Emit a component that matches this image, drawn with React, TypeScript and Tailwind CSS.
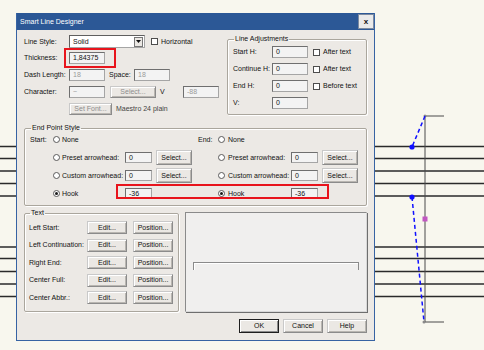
import React from "react";

const txt = "text-[7px] leading-[8px]";

function Input({ value, w = "w-[36px]", h = "h-[12px]", disabled = false }: { value: string; w?: string; h?: string; disabled?: boolean }) {
  return (
    <div
      className={`${w} ${h} shrink-0 flex items-center pl-[3px] border border-[#a5a5a5] border-t-[#6f6f6f] border-l-[#6f6f6f] bg-[#f3f3f3] ${txt} ${disabled ? "text-[#9a9a9a]" : "text-[#111]"}`}
    >
      {value}
    </div>
  );
}

function Btn({ label, w, h = "h-[13px]", disabled = false, def = false }: { label: string; w: string; h?: string; disabled?: boolean; def?: boolean }) {
  return (
    <div
      className={`${w} ${h} shrink-0 flex items-center justify-center bg-[#ebe8e4] ${txt} ${
        def
          ? "border border-[#1e1e1e] shadow-[inset_1px_1px_0_#ffffff,inset_-1px_-1px_0_#8a8a8a]"
          : "border border-[#8b8b8b] border-t-[#c9c9c9] border-l-[#c9c9c9] shadow-[inset_1px_1px_0_#ffffff,inset_-1px_-1px_0_#b9b6b1]"
      } ${disabled ? "text-[#8d8d8d]" : "text-[#111]"}`}
    >
      {label}
    </div>
  );
}

function Check() {
  return <div className="w-[7px] h-[7px] shrink-0 border border-[#4d4d4d] bg-white" />;
}

function Radio({ on = false }: { on?: boolean }) {
  return (
    <div className="w-[7px] h-[7px] shrink-0 rounded-full border border-[#5a5a5a] bg-white flex items-center justify-center">
      {on && <div className="w-[3px] h-[3px] rounded-full bg-[#1a1a1a]" />}
    </div>
  );
}

function Legend({ children }: { children: React.ReactNode }) {
  return <legend className={`ml-[1px] px-[1px] ${txt} text-[#111]`}>{children}</legend>;
}

function EndRow({ label, radioLabel, on, value, select }: { label: string; radioLabel: string; on?: boolean; value?: string; select?: boolean }) {
  return null;
}

function Side({ label, lw, items }: { label: string; lw: string; items: { text: string; on?: boolean; value?: string; select?: boolean }[] }) {
  return null;
}

export default function App() {
  const left = [
    { text: "None" },
    { text: "Preset arrowhead:", value: "0", select: true },
    { text: "Custom arrowhead:", value: "0", select: true },
    { text: "Hook", on: true, value: "-36" },
  ];
  return (
    <div className="relative w-[484px] h-[350px] overflow-hidden bg-[#f8f7ee] font-['Liberation_Sans',Arial,sans-serif]">
      <svg className="absolute inset-0" width="484" height="350" viewBox="0 0 484 350">
        {[146.5, 158.5, 171, 183.5, 196, 247, 258.5, 271.5, 284, 296.5].map((y) => (
          <line key={y} x1="0" y1={y} x2="484" y2={y} stroke="#2a2a2a" strokeWidth="1.3" />
        ))}
        <line x1="425" y1="116" x2="425" y2="322" stroke="#4a4a4a" strokeWidth="1" />
        <line x1="425" y1="116" x2="444" y2="116" stroke="#4a4a4a" strokeWidth="1" />
        <line x1="425" y1="322" x2="444" y2="322" stroke="#4a4a4a" strokeWidth="1" />
        <circle cx="425" cy="116" r="1.5" fill="#8a8a8a" />
        <circle cx="424" cy="322" r="1.5" fill="#8a8a8a" />
        <line x1="425" y1="116" x2="412" y2="147" stroke="#1010ff" strokeWidth="1.5" strokeDasharray="4 3" />
        <line x1="412" y1="197" x2="424" y2="322" stroke="#1010ff" strokeWidth="1.5" strokeDasharray="4 3" />
        <circle cx="412" cy="147" r="2.6" fill="#1010ff" />
        <circle cx="412" cy="197" r="2.6" fill="#1010ff" />
        <rect x="422.5" y="216.5" width="5" height="5" fill="#c157c1" />
      </svg>

      <div className="absolute left-[16px] top-[13px] w-[359px] h-[328px] flex flex-col bg-[#ece9e5] border border-t-0 border-[#3763a3] text-[#111]">
        <div className="h-[17px] shrink-0 bg-[#2c5896] flex items-center justify-between pl-[3px] pr-[0px]">
          <span className="text-[7px] leading-[8px] text-white">Smart Line Designer</span>
          <div className="w-[16px] h-[15px] bg-[#eaeaea] border border-[#7c8aa0] flex items-center justify-center text-[8px] leading-[8px] font-bold text-[#111]">x</div>
        </div>

        <div className="flex flex-col pl-[7px] pr-[7px] pt-[5px]">
          {/* top section */}
          <div className="flex h-[80px]">
            <div className="w-[203px] flex flex-col gap-[4px]">
              <div className="flex items-center h-[13px]">
                <div className={`w-[45px] ${txt}`}>Line Style:</div>
                <div className="w-[76px] h-[13px] flex items-center border border-[#a5a5a5] border-t-[#5f5f5f] border-l-[#5f5f5f] bg-white">
                  <span className={`flex-1 pl-[3px] ${txt}`}>Solid</span>
                  <div className="w-[9px] h-[10px] mr-[1px] flex items-center justify-center bg-[#ebe8e4] border border-[#777]">
                    <svg width="5" height="3" viewBox="0 0 5 3"><path d="M0 0h5L2.5 3z" fill="#111" /></svg>
                  </div>
                </div>
                <div className="ml-[6px]"><Check /></div>
                <span className={`ml-[3px] ${txt}`}>Horizontal</span>
              </div>
              <div className="flex items-center h-[13px]">
                <div className={`w-[45px] ${txt}`}>Thickness:</div>
                <Input value="1,84375" />
              </div>
              <div className="flex items-center h-[13px]">
                <div className={`w-[45px] ${txt}`}>Dash Length:</div>
                <Input value="18" disabled />
                <div className={`w-[29px] pl-[4px] ${txt}`}>Space:</div>
                <Input value="18" disabled />
              </div>
              <div className="flex items-center h-[13px]">
                <div className={`w-[45px] ${txt}`}>Character:</div>
                <Input value="~" disabled />
                <div className="ml-[5px]"><Btn label="Select..." w="w-[46px]" h="h-[12px]" disabled /></div>
                <div className={`w-[27px] pl-[4px] ${txt}`}>V</div>
                <Input value="-88" disabled />
              </div>
              <div className="flex items-center h-[13px]">
                <div className="w-[45px]" />
                <Btn label="Set Font..." w="w-[43px]" h="h-[12px]" disabled />
                <span className={`ml-[4px] ${txt} text-[#444]`}>Maestro 24 plain</span>
              </div>
            </div>

            <fieldset className="w-[140px] h-[80px] border border-[#aaa69d] rounded-[2px] shadow-[inset_1px_1px_0_#ffffff,1px_1px_0_#ffffff] pl-[5px] pt-[3px]">
              <Legend>Line Adjustments</Legend>
              <div className="flex flex-col gap-[5px]">
                {[
                  ["Start H:", "After text"],
                  ["Continue H:", "After text"],
                  ["End H:", "Before text"],
                  ["V:", ""],
                ].map(([l, c]) => (
                  <div key={l} className="flex items-center h-[12px]">
                    <div className={`w-[39px] ${txt}`}>{l}</div>
                    <Input value="0" />
                    {c && (
                      <>
                        <div className="ml-[5px]"><Check /></div>
                        <span className={`ml-[3px] ${txt}`}>{c}</span>
                      </>
                    )}
                  </div>
                ))}
              </div>
            </fieldset>
          </div>

          {/* End point style */}
          <fieldset className="mt-[9px] h-[82px] border border-[#aaa69d] rounded-[2px] shadow-[inset_1px_1px_0_#ffffff,1px_1px_0_#ffffff] pl-[5px]">
            <Legend>End Point Style</Legend>
            <div className="flex flex-col gap-[3px]">
              {left.map((it, i) => (
                <div key={it.text} className="flex items-center h-[15px]">
                  <div className={`w-[23px] ${txt}`}>{i === 0 ? "Start:" : ""}</div>
                  <div className="w-[72px] flex items-center">
                    <Radio on={it.on} />
                    <span className={`ml-[2px] ${txt}`}>{it.text}</span>
                  </div>
                  <div className="w-[67px] flex items-center">
                    {it.value && <Input value={it.value} w="w-[27px]" h="h-[11px]" />}
                    {it.select && <div className="ml-[4px]"><Btn label="Select..." w="w-[36px]" h="h-[15px]" /></div>}
                  </div>
                  <div className={`ml-[6px] w-[20px] ${txt}`}>{i === 0 ? "End:" : ""}</div>
                  <div className="w-[73px] flex items-center">
                    <Radio on={it.on} />
                    <span className={`ml-[3px] ${txt}`}>{it.text}</span>
                  </div>
                  <div className="w-[67px] flex items-center">
                    {it.value && <Input value={it.value} w="w-[27px]" h="h-[11px]" />}
                    {it.select && <div className="ml-[4px]"><Btn label="Select..." w="w-[36px]" h="h-[15px]" /></div>}
                  </div>
                </div>
              ))}
            </div>
          </fieldset>

          {/* Text & preview */}
          <div className="mt-[3px] flex h-[103px]">
            <fieldset className="w-[155px] h-[103px] border border-[#aaa69d] rounded-[2px] shadow-[inset_1px_1px_0_#ffffff,1px_1px_0_#ffffff] pl-[4px] pt-[4px]">
              <Legend>Text</Legend>
              <div className="flex flex-col gap-[4.5px]">
                {["Left Start:", "Left Continuation:", "Right End:", "Center Full:", "Center Abbr.:"].map((l) => (
                  <div key={l} className="flex items-center h-[13px]">
                    <div className={`w-[58px] ${txt}`}>{l}</div>
                    <Btn label="Edit..." w="w-[40px]" />
                    <div className="ml-[6px]"><Btn label="Position..." w="w-[40px]" /></div>
                  </div>
                ))}
              </div>
            </fieldset>
            <div className="ml-[6px] mt-[3px] w-[182px] h-[100px] border border-[#8a8a8a] border-r-[#d8d8d8] border-b-[#d8d8d8] shadow-[1px_1px_0_#6e6e6e] bg-[#f0efee] flex flex-col">
              <div className="mt-[49px] mx-[7px] h-[8px] border border-b-0 border-[#8a8a8a] shadow-[inset_1px_1px_0_#ffffff]" />
            </div>
          </div>

          <div className="mt-[7px] flex justify-end gap-[4px]">
            <Btn label="OK" w="w-[40px]" h="h-[14px]" def />
            <Btn label="Cancel" w="w-[40px]" h="h-[14px]" />
            <Btn label="Help" w="w-[40px]" h="h-[14px]" />
          </div>
        </div>

        <div className="absolute left-[47px] top-[35px] w-[52px] h-[20px] border-2 border-[#e8141c]" />
        <div className="absolute left-[99px] top-[171px] w-[213px] h-[15px] border-2 border-[#e8141c]" />
      </div>
    </div>
  );
}
